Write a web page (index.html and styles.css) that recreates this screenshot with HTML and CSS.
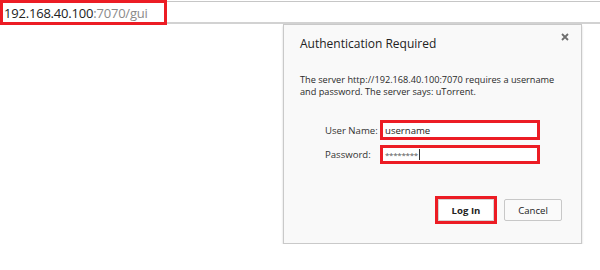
FILE: index.html
```html
<!DOCTYPE html>
<html>
<head>
<meta charset="utf-8">
<link rel="stylesheet" href="styles.css">
</head>
<body>
<div class="bar">
  <div class="url"><span class="host">192.168.40.100</span><span class="path">:7070/gui</span></div>
  <div class="bar-rest"></div>
</div>
<div class="dialog">
  <div class="head">
    <div class="title">Authentication Required</div>
    <svg class="close" width="8" height="8" viewBox="0 0 8 8"><path d="M1 1L7 7M7 1L1 7" stroke="#6e6e6e" stroke-width="1.8"/></svg>
  </div>
  <p class="msg">The server http://192.168.40.100:7070 requires a username<br>and password. The server says: uTorrent.</p>
  <div class="form">
    <label class="lbl">User Name:</label>
    <div class="field">username</div>
    <label class="lbl">Password:</label>
    <div class="field pw">********<span class="caret"></span></div>
  </div>
  <div class="actions">
    <div class="hl"><div class="btn primary">Log In</div></div>
    <div class="btn cancel">Cancel</div>
  </div>
</div>
</body>
</html>
```
FILE: styles.css
```css
html, body {
  margin: 0;
  padding: 0;
  background: #fff;
  font-family: "Open Sans", "Noto Sans", sans-serif;
}
.bar {
  display: flex;
  height: 24px;
}
.url {
  box-sizing: border-box;
  width: 167px;
  height: 25px;
  border: 3px solid #ec1c24;
  padding: 2px 0 0 1px;
  font-size: 13px;
  line-height: 17px;
  white-space: nowrap;
  letter-spacing: -0.2px;
}
.host { color: #222; }
.path { color: #8a8a8a; }
.bar-rest {
  flex: 1;
  margin-top: 1px;
  height: 20px;
  border-top: 1px solid #c6c6c6;
  border-bottom: 2px solid #d2d2d2;
}
.dialog {
  box-sizing: border-box;
  margin-left: 283px;
  width: 299px;
  height: 220px;
  background: #f9f9f9;
  border: 1px solid #c9c9c9;
  box-shadow: 0 2px 2px rgba(0,0,0,0.18);
  padding: 0 18px 0 16px;
  color: #333;
}
.head {
  display: flex;
  justify-content: space-between;
  align-items: flex-start;
  height: 40px;
}
.title {
  font-size: 12px;
  line-height: 16px;
  margin-top: 11px;
  color: #222;
}
.close {
  margin-top: 8px;
  margin-right: -6px;
}
.msg {
  margin: 9px 0 0;
  font-size: 9.2px;
  line-height: 12px;
  white-space: nowrap;
  color: #2a2a2a;
}
.form {
  display: grid;
  grid-template-columns: 55px 160px;
  grid-template-rows: 20px 19px;
  row-gap: 5px;
  margin: 22px 0 0 25px;
  align-items: center;
  font-size: 9.6px;
}
.lbl { color: #333; }
.field {
  box-sizing: border-box;
  height: 100%;
  border: 3px solid #ec1c24;
  background: #fff;
  padding-left: 2px;
  display: flex;
  align-items: center;
  color: #222;
}
.pw { font-size: 8px; color: #555; letter-spacing: -0.3px; }
.caret {
  display: inline-block;
  width: 1px;
  height: 11px;
  background: #333;
  margin-left: 1px;
}
.actions {
  display: flex;
  justify-content: flex-end;
  align-items: center;
  gap: 7px;
  margin-top: 32px;
  margin-right: 1px;
}
.hl {
  box-sizing: border-box;
  width: 62px;
  height: 28px;
  border: 3px solid #ec1c24;
  display: flex;
}
.btn {
  box-sizing: border-box;
  display: flex;
  align-items: center;
  justify-content: center;
  font-size: 9.6px;
  color: #222;
  background: #fff;
}
.primary {
  flex: 1;
  border: 1px solid #d4d4d4;
  font-weight: bold;
}
.cancel {
  width: 58px;
  height: 22px;
  border: 1px solid #c8c8c8;
  border-radius: 2px;
  background: #fafafa;
}
```
